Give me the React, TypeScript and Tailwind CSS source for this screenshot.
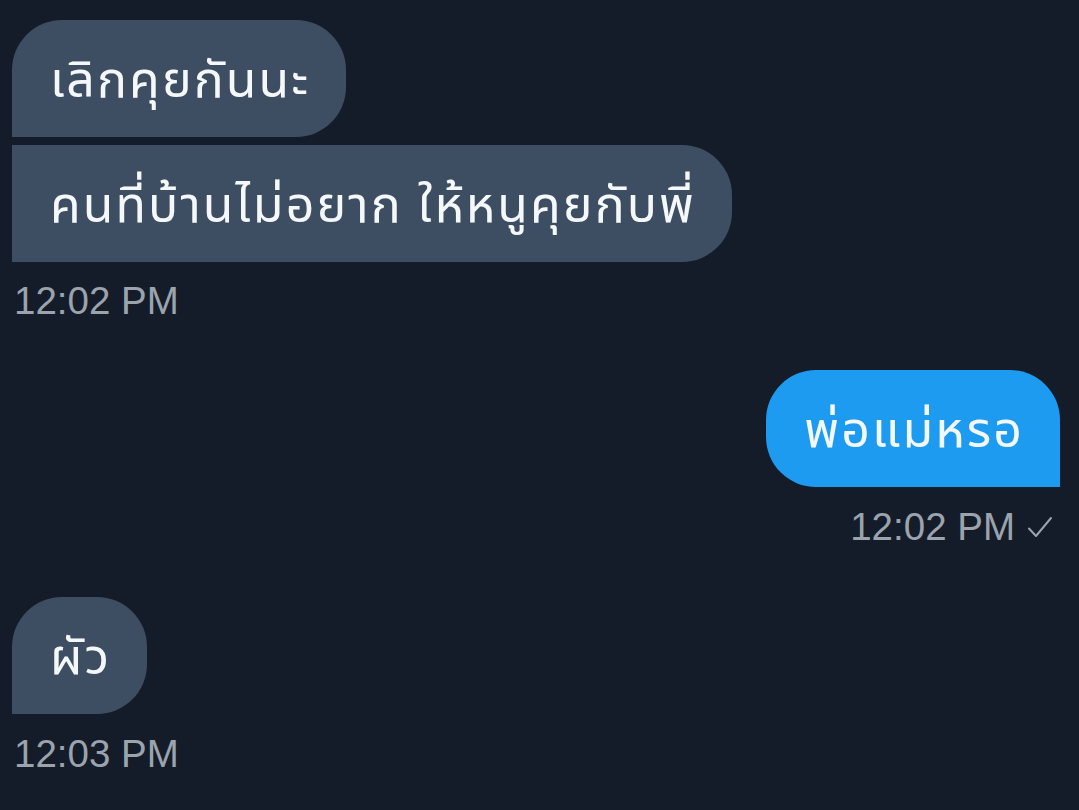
import React from "react";

type Msg = {
  id: string;
  text: string;
  mine?: boolean;
  corners: string;
};

const thai = "font-['Noto_Sans_Thai','Noto_Sans','DejaVu_Sans',sans-serif]";
const meta = "font-['Liberation_Sans','Arial',sans-serif]";

function Bubble({ msg }: { msg: Msg }) {
  return (
    <div
      className={`flex h-[117px] items-center pl-[38px] pr-[36px] text-[50px] leading-none tracking-[2.1px] text-[#f5f8fa] ${thai} ${msg.corners} ${
        msg.mine ? "bg-[#1d9bf0]" : "bg-[#3e4e62]"
      }`}
    >
      <span className="pt-[6px]">{msg.text}</span>
    </div>
  );
}

function Stamp({ time, read, right }: { time: string; read?: boolean; right?: boolean }) {
  return (
    <div
      className={`flex items-center gap-[12px] text-[38.5px] leading-[44px] text-[#9ba3ad] ${meta} ${
        right ? "justify-end pr-[26px]" : "pl-[14px]"
      }`}
    >
      <span>{time}</span>
      {read && (
        <svg width="26" height="24" viewBox="0 0 26 24" fill="none">
          <path d="M2 13.5 L9 21 L24 3" stroke="#9ba3ad" strokeWidth="2" strokeLinecap="round" strokeLinejoin="round" />
        </svg>
      )}
    </div>
  );
}

export default function App() {
  return (
    <div className="h-[810px] w-full overflow-hidden bg-[#151c29]">
      <div className="flex flex-col items-start pl-[12px] pt-[20px]">
        <Bubble msg={{ id: "1", text: "เลิกคุยกันนะ", corners: "rounded-t-[50px] rounded-br-[50px]" }} />
        <div className="mt-[8px]">
          <Bubble msg={{ id: "2", text: "คนที่บ้านไม่อยาก ให้หนูคุยกับพี่", corners: "rounded-r-[50px]" }} />
        </div>
      </div>
      <div className="mt-[17px]">
        <Stamp time="12:02 PM" />
      </div>

      <div className="mt-[47px] flex justify-end pr-[19px]">
        <Bubble msg={{ id: "3", text: "พ่อแม่หรอ", mine: true, corners: "rounded-t-[50px] rounded-bl-[50px]" }} />
      </div>
      <div className="mt-[18px]">
        <Stamp time="12:02 PM" read right />
      </div>

      <div className="mt-[48px] flex pl-[12px]">
        <Bubble msg={{ id: "4", text: "ผัว", corners: "rounded-t-[50px] rounded-br-[50px]" }} />
      </div>
      <div className="mt-[18px]">
        <Stamp time="12:03 PM" />
      </div>
    </div>
  );
}
